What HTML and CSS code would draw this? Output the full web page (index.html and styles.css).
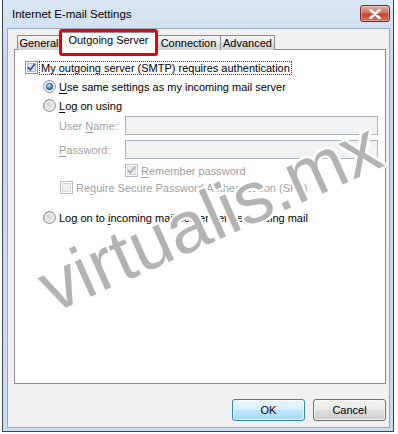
FILE: index.html
```html
<!DOCTYPE html>
<html lang="en">
	<head>
		<meta charset="utf-8" />
		<meta name="viewport" content="width=device-width, initial-scale=1" />
		<title>Internet E-mail Settings</title>
		<link rel="stylesheet" href="styles.css">
	</head>
	<body>
		<div class="window">
			<div class="titlebar">
				<span class="title">Internet E-mail Settings</span>
				<button class="close" aria-label="Close">
					<svg width="12" height="10" viewBox="0 0 12 10"><path d="M1.5 1 L10.5 9 M10.5 1 L1.5 9" stroke="#fff" stroke-width="2.4" stroke-linecap="round"/></svg>
				</button>
			</div>

			<div class="client">
				<div class="tabs">
					<div class="tab general">General</div>
					<div class="tab outgoing selected">Outgoing Server</div>
					<div class="tab connection">Connection</div>
					<div class="tab advanced">Advanced</div>
				</div>

				<div class="panel">
					<label class="row level0">
						<svg class="box" width="13" height="13" viewBox="0 0 13 13">
							<rect x="0.5" y="0.5" width="12" height="12" fill="#fff" stroke="#8e8f8f"/>
							<rect x="2.5" y="2.5" width="8" height="8" fill="#dfe6f2" stroke="#b3bccb"/>
							<path d="M3 6.2 L5.3 8.8 L10 2.8" fill="none" stroke="#3b56a0" stroke-width="1.8"/>
						</svg>
						<span class="focused">My <u>o</u>utgoing server (SMTP) requires authentication</span>
					</label>

					<label class="row level1">
						<svg class="box" width="13" height="13" viewBox="0 0 13 13">
							<defs>
								<radialGradient id="dot" cx="0.4" cy="0.35" r="0.6">
									<stop offset="0" stop-color="#b5e3f9"/>
									<stop offset="1" stop-color="#1f5f8f"/>
								</radialGradient>
							</defs>
							<circle cx="6.5" cy="6.5" r="6" fill="#eef0f3" stroke="#8c8e90"/>
							<circle cx="6.5" cy="6.5" r="3.4" fill="url(#dot)" stroke="#30628c" stroke-width="0.6"/>
						</svg>
						<span><u>U</u>se same settings as my incoming mail server</span>
					</label>

					<label class="row level1">
						<svg class="box" width="13" height="13" viewBox="0 0 13 13">
							<defs>
								<linearGradient id="radio" x1="0" y1="0" x2="1" y2="1">
									<stop offset="0" stop-color="#c9ccd1"/>
									<stop offset="1" stop-color="#f4f4f4"/>
								</linearGradient>
							</defs>
							<circle cx="6.5" cy="6.5" r="6" fill="url(#radio)" stroke="#8c8e90"/>
							<circle cx="6.5" cy="6.5" r="4" fill="none" stroke="#fff" stroke-opacity="0.6"/>
						</svg>
						<span><u>L</u>og on using</span>
					</label>

					<div class="field first">
						<span class="label">User <u>N</u>ame:</span>
						<input class="input" type="text" disabled>
					</div>
					<div class="field">
						<span class="label"><u>P</u>assword:</span>
						<input class="input" type="password" disabled>
					</div>

					<label class="row small remember disabled">
						<svg class="box" width="13" height="13" viewBox="0 0 13 13">
							<rect x="0.5" y="0.5" width="12" height="12" fill="#fff" stroke="#bcbcbc"/>
							<rect x="2.5" y="2.5" width="8" height="8" fill="#f0f0f0" stroke="#d6d6d6"/>
							<path d="M3 6.2 L5.3 8.8 L10 2.8" fill="none" stroke="#adadad" stroke-width="1.8"/>
						</svg>
						<span><u>R</u>emember password</span>
					</label>

					<label class="row small level2 disabled">
						<svg class="box" width="13" height="13" viewBox="0 0 13 13">
							<rect x="0.5" y="0.5" width="12" height="12" fill="#fff" stroke="#bcbcbc"/>
							<rect x="2.5" y="2.5" width="8" height="8" fill="#f0f0f0" stroke="#d6d6d6"/>
						</svg>
						<span>Re<u>q</u>uire Secure Password Authentication (SPA)</span>
					</label>

					<label class="row level1 last">
						<svg class="box" width="13" height="13" viewBox="0 0 13 13">
							<circle cx="6.5" cy="6.5" r="6" fill="url(#radio)" stroke="#8c8e90"/>
							<circle cx="6.5" cy="6.5" r="4" fill="none" stroke="#fff" stroke-opacity="0.6"/>
						</svg>
						<span>Log on to <u>i</u>ncoming mail server before sending mail</span>
					</label>
				</div>

				<div class="buttons">
					<button class="btn default">OK</button>
					<button class="btn">Cancel</button>
				</div>
			</div>

			<div class="watermark">virtualis.mx</div>
		</div>
	</body>
</html>
```

FILE: styles.css
```css
* {
	box-sizing: border-box;
}

body {
	margin: 0;
	background: #fff;
	font-family: "Liberation Sans", Arial, sans-serif;
	font-size: 11px;
	color: #000;
}

u {
	text-decoration-thickness: 1px;
	text-underline-offset: 2px;
}

.window {
	position: relative;
	overflow: hidden;
	width: 392px;
	height: 432px;
	margin-left: 2px;
	border: 1px solid #3d4550;
	border-top: 0;
	padding: 0 3px 3px 4px;
	background: linear-gradient(#dbe7f4, #c4d7ec 60px, #c9dbee);
	display: flex;
	flex-direction: column;
}

.titlebar {
	height: 28px;
	display: flex;
	align-items: flex-start;
	justify-content: space-between;
	padding: 6px 0 0 5px;
}

.title {
	font-size: 11.5px;
	line-height: 16px;
}

.close {
	width: 30px;
	height: 17px;
	margin-top: -1px;
	padding: 0;
	border: 1px solid #6b2c25;
	border-radius: 3px;
	background: linear-gradient(#e9a99c, #d2705e 45%, #c2452f 55%, #d6735c);
	box-shadow: inset 0 0 0 1px rgba(255, 255, 255, 0.35);
	display: flex;
	align-items: center;
	justify-content: center;
}

.client {
	flex: 1;
	background: #f0f0f0;
	border: 1px solid #9aabbf;
	padding: 4px 3px 0 6px;
	display: flex;
	flex-direction: column;
}

.tabs {
	display: flex;
	align-items: flex-end;
	height: 17px;
	padding-left: 3px;
	margin-bottom: -1px;
	position: relative;
	z-index: 1;
}

.tab {
	height: 15px;
	line-height: 15px;
	text-align: center;
	border: 1px solid #898c95;
	border-bottom: 0;
	border-left: 0;
	background: linear-gradient(#f3f3f3, #ebebeb 50%, #dddddd 50%, #d4d4d4);
	white-space: nowrap;
}

.tab.general {
	width: 44px;
	border-left: 1px solid #898c95;
}

.tab.outgoing {
	width: 99px;
}

.tab.connection {
	width: 64px;
}

.tab.advanced {
	width: 54px;
}

.tab.selected {
	position: relative;
	height: 18px;
	line-height: 15px;
	margin: 0 -1px 0 -2px;
	border-left: 1px solid #898c95;
	background: #fff;
}

.tab.selected::after {
	content: "";
	position: absolute;
	left: -1px;
	top: -4px;
	right: -1px;
	bottom: -6px;
	border: 3px solid #e5020d;
	border-radius: 3px;
}

.panel {
	height: 335px;
	background: #fff;
	border: 1px solid #898c95;
	padding: 8px 0 0 10px;
	display: flex;
	flex-direction: column;
}

.row {
	display: flex;
	align-items: center;
	gap: 3px;
	height: 19px;
	white-space: nowrap;
}

.row.small {
	height: 17px;
}

.box {
	flex: none;
}

.focused {
	outline: 1px dotted #333;
	outline-offset: 0;
	padding: 0 1px;
	margin-left: -1px;
}

.level1 {
	padding-left: 18px;
}

.level2 {
	padding-left: 35px;
}

.remember {
	margin-top: 3px;
	padding-left: 100px;
}

.last {
	margin-top: 12px;
}

.disabled {
	color: #9f9f9f;
}

.field {
	display: flex;
	align-items: center;
	height: 19px;
	margin-top: 5px;
	padding-left: 34px;
	color: #9f9f9f;
}

.field.first {
	margin-top: 1px;
}

.label {
	width: 66px;
}

.input {
	width: 253px;
	height: 19px;
	margin: 0;
	border: 1px solid #abb3bd;
	background: #f2f2f2;
}

.buttons {
	display: flex;
	justify-content: flex-end;
	gap: 8px;
	margin-top: 15px;
}

.btn {
	width: 73px;
	height: 22px;
	padding: 0;
	font-family: "Liberation Sans", Arial, sans-serif;
	font-size: 11px;
	color: #000;
	border: 1px solid #707070;
	border-radius: 3px;
	background: linear-gradient(#f2f2f2, #ebebeb 50%, #dddddd 50%, #cfcfcf);
	box-shadow: inset 0 0 0 1px rgba(255, 255, 255, 0.7);
}

.btn.default {
	border-color: #3c7fb1;
	background: linear-gradient(#eaf6fd, #d9f0fc 50%, #bee6fd 50%, #a7d9f5);
}

.watermark {
	position: absolute;
	left: 206px;
	top: 216px;
	transform: translate(-50%, -50%) rotate(-24deg);
	font-size: 73px;
	line-height: 1;
	color: #b3b3b3;
	white-space: nowrap;
	pointer-events: none;
	text-shadow: 2px 0 #fff, -2px 0 #fff, 0 2px #fff, 0 -2px #fff, 2px 2px #fff, -2px -2px #fff, 2px -2px #fff, -2px 2px #fff;
}
```
